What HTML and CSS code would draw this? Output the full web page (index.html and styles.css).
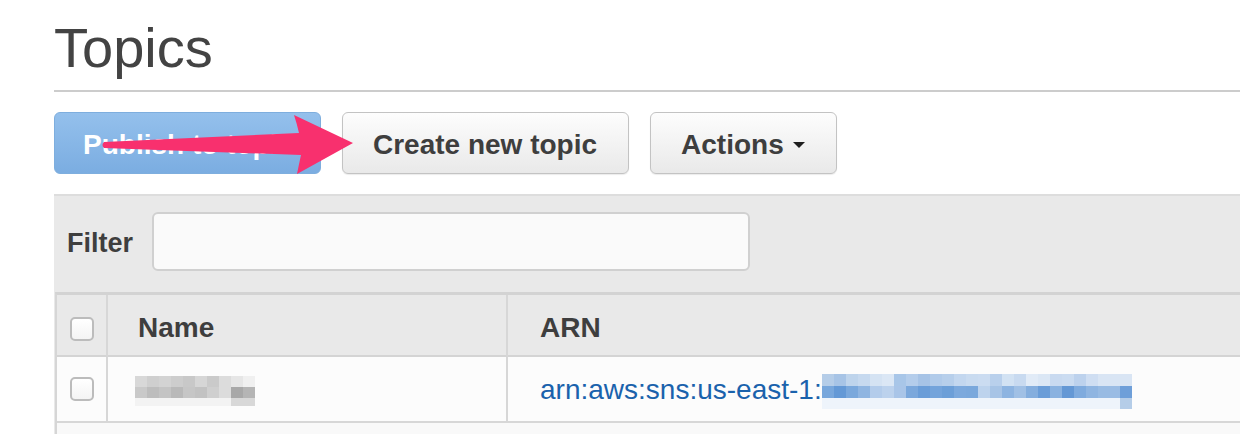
FILE: index.html
```html
<!DOCTYPE html>
<html lang="en">
<head>
<meta charset="utf-8">
<title>Topics</title>
<link rel="stylesheet" href="styles.css">
</head>
<body>
<div class="page">
  <h1 class="title">Topics</h1>
  <hr class="rule">
  <div class="toolbar">
    <button class="btn btn-primary" type="button">Publish to topic</button>
    <button class="btn" type="button">Create new topic</button>
    <button class="btn" type="button">Actions <span class="caret"></span></button>
  </div>
  <div class="panel">
    <div class="filter">
      <label class="filter-label" for="filter">Filter</label>
      <input class="filter-input" id="filter" type="text">
    </div>
    <table class="grid">
      <thead>
        <tr>
          <th class="col-check"><span class="checkbox"></span></th>
          <th class="col-name">Name</th>
          <th class="col-arn">ARN</th>
        </tr>
      </thead>
      <tbody>
        <tr>
          <td class="col-check"><span class="checkbox"></span></td>
          <td class="col-name"><span class="blur-name"></span></td>
          <td class="col-arn"><a class="arn" href="#">arn:aws:sns:us-east-1:</a><span class="blur-arn"></span></td>
        </tr>
      </tbody>
    </table>
    <div class="grid-foot"></div>
  </div>
</div>
<svg class="annot" width="1240" height="434" viewBox="0 0 1240 434" aria-hidden="true">
  <path class="arrow" d="M104,142 L299,133 Q297,124 294,115 L353,143 L297,174 Q299,164 301,155 L104,148 Q101,145 104,142 Z"/>
</svg>
</body>
</html>
```

FILE: styles.css
```css
html, body {
  margin: 0;
  padding: 0;
  background: #ffffff;
  overflow: hidden;
}

body {
  position: relative;
  width: 1240px;
  height: 434px;
  font-family: "Liberation Sans", Arial, Helvetica, sans-serif;
  color: #444444;
}

.page {
  margin-left: 54px;
  margin-right: -60px;
  padding-top: 16px;
}

.title {
  margin: 0;
  font-size: 56px;
  font-weight: normal;
  line-height: 64px;
  color: #434343;
}

.rule {
  margin: 10px 0 0;
  border: 0;
  height: 2px;
  background: #cccccc;
}

.toolbar {
  display: flex;
  gap: 21px;
  margin-top: 20px;
}

.btn {
  display: flex;
  align-items: center;
  gap: 9px;
  box-sizing: border-box;
  height: 62px;
  padding: 3px 31px 0 30px;
  margin: 0;
  font-family: "Liberation Sans", Arial, sans-serif;
  font-size: 28px;
  font-weight: bold;
  color: #3e3e3e;
  background: linear-gradient(#fdfdfd, #e9e9e9);
  border: 1px solid #c3c3c3;
  border-radius: 6px;
  box-shadow: 0 1px 1px rgba(0, 0, 0, 0.08);
}

.btn-primary {
  padding-left: 28px;
  padding-right: 27px;
  color: #ffffff;
  background: linear-gradient(#94c0ec, #7badE1);
  border-color: #7eaede;
  box-shadow: none;
}

.caret {
  width: 0;
  height: 0;
  margin-top: 1px;
  border-left: 6px solid transparent;
  border-right: 6px solid transparent;
  border-top: 6px solid #1f1f1f;
}

.panel {
  margin-top: 20px;
  border-top: 2px solid #dddddd;
  background: #e9e9e9;
}

.filter {
  display: flex;
  align-items: center;
  gap: 19px;
  padding: 16px 0 21px 13px;
}

.filter-label {
  padding-top: 3px;
  font-size: 27px;
  font-weight: bold;
  color: #3e3e3e;
}

.filter-input {
  box-sizing: border-box;
  width: 598px;
  height: 59px;
  margin: 0;
  border: 2px solid #d0d0d0;
  border-radius: 6px;
  background: #fafafa;
}

.grid {
  width: calc(100% - 1px);
  margin-left: 1px;
  table-layout: fixed;
  border-collapse: separate;
  border-spacing: 0;
  border-top: 3px solid #d3d3d3;
  border-left: 2px solid #d6d6d6;
}

.grid th,
.grid td {
  box-sizing: border-box;
  padding: 0;
  text-align: left;
  vertical-align: middle;
}

.grid th {
  height: 62px;
  padding-top: 5px;
  background: #e9e9e9;
  border-bottom: 2px solid #d4d4d4;
  font-size: 28px;
  font-weight: bold;
  color: #3e3e3e;
}

.grid td {
  height: 66px;
  background: #fcfcfc;
  border-bottom: 2px solid #d7d7d7;
}

.col-check {
  width: 51px;
  text-align: center !important;
  border-right: 2px solid #d7d7d7;
}

.grid .col-name {
  width: 400px;
  padding-left: 30px;
  border-right: 2px solid #d7d7d7;
}

.grid .col-arn {
  padding-left: 32px;
}

.checkbox {
  display: inline-block;
  box-sizing: border-box;
  width: 24px;
  height: 24px;
  vertical-align: middle;
  border: 2px solid #bcbcbc;
  border-radius: 5px;
  background: linear-gradient(#ffffff, #f4f4f4);
}

.blur-name {
  display: inline-block;
  width: 120px;
  height: 30px;
  margin-left: -3px;
  margin-top: 4px;
  vertical-align: middle;
  background:
    linear-gradient(to right, #d8d8d8 0 12px, #cfcfcf 12px 24px, #d3d3d3 24px 36px, #cdcdcd 36px 48px, #c8c8c8 48px 60px, #d6d6d6 60px 72px, #cacaca 72px 84px, #dcdcdc 84px 96px, #e6e6e6 96px 108px, #f0f0f0 108px 120px) 0 0 / 120px 11px no-repeat,
    linear-gradient(to right, #c9c9c9 0 12px, #bdbdbd 12px 24px, #c4c4c4 24px 36px, #b9b9b9 36px 48px, #c6c6c6 48px 60px, #c2c2c2 60px 72px, #cfcfcf 72px 84px, #dcdcdc 84px 96px, #a8a8a8 96px 108px, #b5b5b5 108px 120px) 0 11px / 120px 11px no-repeat,
    linear-gradient(to right, #f3f3f3 0 96px, #d8d8d8 96px 120px) 0 22px / 120px 8px no-repeat;
}

.arn {
  font-size: 28px;
  color: #1a62ac;
  text-decoration: none;
  vertical-align: middle;
}

.blur-arn {
  display: inline-block;
  width: 310px;
  height: 35px;
  vertical-align: middle;
  margin-top: 4px;
  background:
    linear-gradient(to right, #b5cde8 0 12px, #a7c4e6 12px 24px, #bed4ec 24px 36px, #c6d9ef 36px 48px, #d5e3f3 48px 60px, #dbe7f5 60px 72px, #a8c6e8 72px 84px, #b4cdeb 84px 96px, #a6c3e6 96px 108px, #b1cbea 108px 120px, #b7cfeb 120px 132px, #c3d7ef 132px 144px, #c9dbf0 144px 156px, #cbdcf1 156px 168px, #b9d0ec 168px 180px, #d2e2f3 180px 192px, #c8daf0 192px 204px, #e1ebf7 204px 216px, #dbe7f5 216px 228px, #c9daf0 228px 240px, #cbdcf1 240px 252px, #bdd2ed 252px 264px, #cfdef2 264px 276px, #d9e5f4 276px 310px) 0 0 / 310px 12px no-repeat,
    linear-gradient(to right, #78a7dc 0 12px, #6499d6 12px 24px, #7aa8dc 24px 36px, #8fb5e1 36px 48px, #b3cceb 48px 60px, #bcd2ed 60px 72px, #a9c5e8 72px 84px, #7ba8dc 84px 96px, #6a9dd8 96px 108px, #74a4db 108px 120px, #6c9fd8 120px 132px, #7ca9dd 132px 144px, #7aa8dc 144px 156px, #bdd3ed 156px 168px, #a7c4e6 168px 180px, #8db4e1 180px 192px, #a0c0e5 192px 204px, #84aede 204px 216px, #6a9dd8 216px 228px, #8ab2e0 228px 240px, #6498d5 240px 252px, #7fabde 252px 264px, #8fb5e1 264px 276px, #98bbe3 276px 288px, #9abce4 288px 298px, #6e9fd9 298px 310px) 0 12px / 310px 12px no-repeat,
    linear-gradient(to right, #eef4fb 0 298px, #b5cde8 298px 310px) 0 24px / 310px 11px no-repeat;
}

.grid-foot {
  height: 20px;
  margin-left: 1px;
  background: #f9f9f9;
  border-left: 2px solid #d6d6d6;
}

.annot {
  position: absolute;
  left: 0;
  top: 0;
  pointer-events: none;
}

.arrow {
  fill: #f8306e;
}
```
